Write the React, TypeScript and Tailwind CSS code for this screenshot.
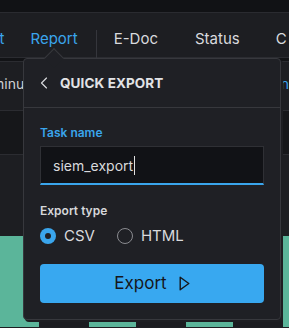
import { ChevronLeft } from "lucide-react";

const font = { fontFamily: "Inter, 'Noto Sans', sans-serif" };

function Radio({ checked, label }: { checked?: boolean; label: string }) {
  return (
    <label className="flex items-center gap-[8px]">
      {checked ? (
        <span className="flex h-[16px] w-[16px] items-center justify-center rounded-full bg-[#3aa5ec]">
          <span className="h-[6px] w-[6px] rounded-full bg-[#1f2025]" />
        </span>
      ) : (
        <span className="h-[16px] w-[16px] rounded-full border-[1.5px] border-[#8a8b90]" />
      )}
      <span className="text-[15px] leading-[22px] text-[#d9dadd]">{label}</span>
    </label>
  );
}

export default function App() {
  return (
    <div className="relative h-[328px] w-[289px] overflow-hidden bg-[#1d1e22]" style={font}>
      {/* page behind */}
      <div className="h-[13px] border-b border-[#2a2b30] bg-[#111215]" />
      <nav className="flex h-[45px] items-center border-b border-[#2b2c31] bg-[#1d1e22] pt-[9px] text-[15px] text-[#d9dadd]">
        <span className="ml-[-9px] text-[#3aa5ec]">ct</span>
        <span className="ml-[26px] text-[#3aa5ec]">Report</span>
        <span className="ml-[18px] mb-[-1px] h-[28px] self-end border-l border-[#35363c]" />
        <span className="ml-[17px]">E-Doc</span>
        <span className="ml-[37px]">Status</span>
        <span className="ml-[36px]">C</span>
      </nav>
      <div className="h-[3px] bg-[#121316]" />
      <div className="flex h-[50px] items-center justify-between border-y border-[#2b2c31] bg-[#1d1e22] pb-[5px] text-[14px]">
        <span className="ml-[-8px] text-[#d0d1d4]">minu</span>
        <span className="mr-[-8px] text-[#3aa5ec]">nc</span>
      </div>
      <div className="h-[44px] border-b border-[#2b2c31] bg-[#16171a]" />
      <div className="h-[81px] bg-[#1d1e22]" />
      <div className="flex h-[91px] items-end gap-[47px] bg-[#5bb59a] pl-[39px]">
        <div className="h-[9px] w-[50px] bg-[#1b1c20]" />
        <div className="h-[9px] w-[50px] bg-[#1b1c20]" />
        <div className="h-[9px] w-[50px] bg-[#1b1c20]" />
      </div>

      {/* popover */}
      <div className="absolute left-[23px] top-[58px] w-[258px] rounded-[4px] border border-[#37383d] bg-[#1f2025] shadow-[2px_2px_0_#1d1e22]">
        <span className="absolute left-[23px] top-[-8px] h-[14px] w-[14px] rotate-45 border-l border-t border-[#37383d] bg-[#1f2025]" />
        <div className="relative flex h-[49px] items-center gap-[6px] border-b border-[#37383d] pl-[10px] pr-[13px]">
          <ChevronLeft className="h-[20px] w-[20px] text-[#d9dadd]" strokeWidth={1.4} />
          <span className="text-[13.5px] font-bold tracking-[0.1px] text-[#e2e3e6]">QUICK EXPORT</span>
        </div>
        <div className="px-[16px] pb-[16px] pt-[17px]">
          <div className="text-[12px] font-semibold leading-[16px] text-[#3aa5ec]">Task name</div>
          <div className="mt-[5px] flex h-[39px] items-center border border-b-2 border-[#2f3035] border-b-[#3aa5ec] bg-[#111216] px-[12px]">
            <span className="text-[14px] text-[#d9dadd]">siem_export</span>
            <span className="ml-[1px] h-[19px] w-px bg-[#e0e0e0]" />
          </div>
          <div className="mt-[18px] text-[12px] font-semibold leading-[16px] text-[#d6d7da]">Export type</div>
          <div className="mt-[6px] flex items-center gap-[22px]">
            <Radio checked label="CSV" />
            <Radio label="HTML" />
          </div>
          <button className="mt-[17px] flex h-[39px] w-full items-center justify-center gap-[12px] rounded-[4px] bg-[#38a8f0] text-[17px] text-[#15161a]">
            Export
            <svg width="11" height="15" viewBox="0 0 11 15" fill="none" stroke="currentColor" strokeWidth="1.4" strokeLinejoin="round">
              <path d="M1.2 1.2 L9.8 7.5 L1.2 13.8 Z" />
            </svg>
          </button>
        </div>
      </div>
    </div>
  );
}
